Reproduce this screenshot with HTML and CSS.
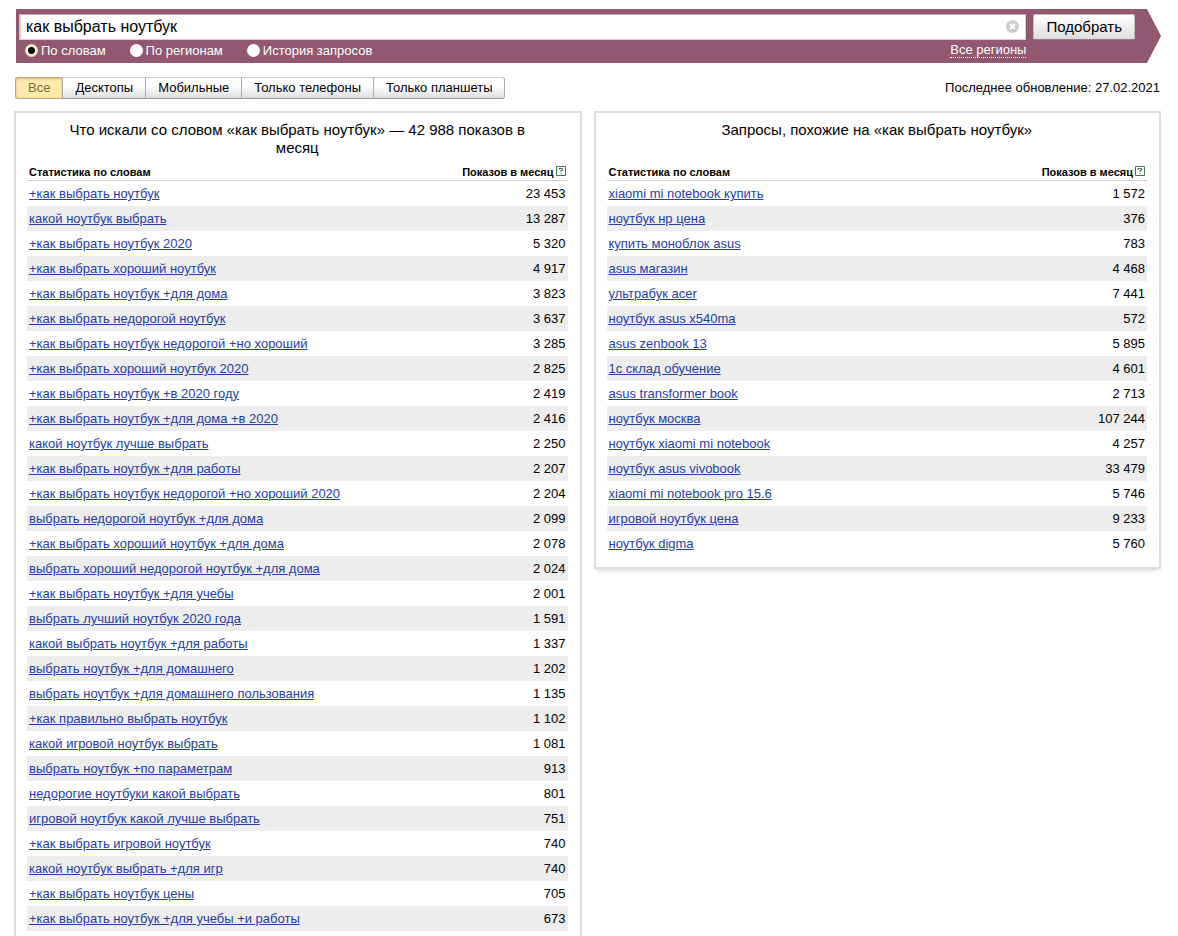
FILE: index.html
```
<!DOCTYPE html>
<html lang="ru">
<head>
    <meta charset="UTF-8">
    <meta name="viewport" content="width=device-width, initial-scale=1.0">
    <title>Подбор слов</title>
    <link rel="stylesheet" href="styles.css">
</head>
<body>
    <form class="search">
        <div class="search-main">
            <div class="search-field">
                <input type="text" class="search-input" value="как выбрать ноутбук" aria-label="Запрос">
                <button type="reset" class="search-clear" aria-label="Очистить">
                    <svg width="13" height="13" viewBox="0 0 13 13">
                        <circle cx="6.5" cy="6.5" r="6.5" fill="#ccc"/>
                        <path d="M4 4l5 5M9 4l-5 5" stroke="#fff" stroke-width="2"/>
                    </svg>
                </button>
            </div>
            <div class="search-options">
                <label class="option"><input type="radio" name="mode" checked>По словам</label>
                <label class="option"><input type="radio" name="mode">По регионам</label>
                <label class="option"><input type="radio" name="mode">История запросов</label>
                <a href="#" class="regions">Все регионы</a>
            </div>
        </div>
        <button type="submit" class="search-button">Подобрать</button>
    </form>

    <div class="toolbar">
        <div class="tabs">
            <button type="button" class="tab active">Все</button>
            <button type="button" class="tab">Десктопы</button>
            <button type="button" class="tab">Мобильные</button>
            <button type="button" class="tab">Только телефоны</button>
            <button type="button" class="tab">Только планшеты</button>
        </div>
        <div class="updated">Последнее обновление: 27.02.2021</div>
    </div>

    <div class="panels">
        <div class="panel">
            <h2>Что искали со словом «как выбрать ноутбук» — 42 988 показов в месяц</h2>
            <table>
                <thead>
                    <tr>
                        <th>Статистика по словам</th>
                        <th>Показов в месяц<a href="#" class="help" aria-label="Справка"><svg width="10" height="10" viewBox="0 0 10 10" fill="none" stroke="#3f7550"><path d="M.5 .5h9v9h-9z"/><path d="M3 4V2.500h3.500v2H5V6M4.500 7.500h1"/></svg></a></th>
                    </tr>
                </thead>
                <tbody>
                    <tr><td><a href="#">+как выбрать ноутбук</a></td><td>23 453</td></tr>
                    <tr><td><a href="#">какой ноутбук выбрать</a></td><td>13 287</td></tr>
                    <tr><td><a href="#">+как выбрать ноутбук 2020</a></td><td>5 320</td></tr>
                    <tr><td><a href="#">+как выбрать хороший ноутбук</a></td><td>4 917</td></tr>
                    <tr><td><a href="#">+как выбрать ноутбук +для дома</a></td><td>3 823</td></tr>
                    <tr><td><a href="#">+как выбрать недорогой ноутбук</a></td><td>3 637</td></tr>
                    <tr><td><a href="#">+как выбрать ноутбук недорогой +но хороший</a></td><td>3 285</td></tr>
                    <tr><td><a href="#">+как выбрать хороший ноутбук 2020</a></td><td>2 825</td></tr>
                    <tr><td><a href="#">+как выбрать ноутбук +в 2020 году</a></td><td>2 419</td></tr>
                    <tr><td><a href="#">+как выбрать ноутбук +для дома +в 2020</a></td><td>2 416</td></tr>
                    <tr><td><a href="#">какой ноутбук лучше выбрать</a></td><td>2 250</td></tr>
                    <tr><td><a href="#">+как выбрать ноутбук +для работы</a></td><td>2 207</td></tr>
                    <tr><td><a href="#">+как выбрать ноутбук недорогой +но хороший 2020</a></td><td>2 204</td></tr>
                    <tr><td><a href="#">выбрать недорогой ноутбук +для дома</a></td><td>2 099</td></tr>
                    <tr><td><a href="#">+как выбрать хороший ноутбук +для дома</a></td><td>2 078</td></tr>
                    <tr><td><a href="#">выбрать хороший недорогой ноутбук +для дома</a></td><td>2 024</td></tr>
                    <tr><td><a href="#">+как выбрать ноутбук +для учебы</a></td><td>2 001</td></tr>
                    <tr><td><a href="#">выбрать лучший ноутбук 2020 года</a></td><td>1 591</td></tr>
                    <tr><td><a href="#">какой выбрать ноутбук +для работы</a></td><td>1 337</td></tr>
                    <tr><td><a href="#">выбрать ноутбук +для домашнего</a></td><td>1 202</td></tr>
                    <tr><td><a href="#">выбрать ноутбук +для домашнего пользования</a></td><td>1 135</td></tr>
                    <tr><td><a href="#">+как правильно выбрать ноутбук</a></td><td>1 102</td></tr>
                    <tr><td><a href="#">какой игровой ноутбук выбрать</a></td><td>1 081</td></tr>
                    <tr><td><a href="#">выбрать ноутбук +по параметрам</a></td><td>913</td></tr>
                    <tr><td><a href="#">недорогие ноутбуки какой выбрать</a></td><td>801</td></tr>
                    <tr><td><a href="#">игровой ноутбук какой лучше выбрать</a></td><td>751</td></tr>
                    <tr><td><a href="#">+как выбрать игровой ноутбук</a></td><td>740</td></tr>
                    <tr><td><a href="#">какой ноутбук выбрать +для игр</a></td><td>740</td></tr>
                    <tr><td><a href="#">+как выбрать ноутбук цены</a></td><td>705</td></tr>
                    <tr><td><a href="#">+как выбрать ноутбук +для учебы +и работы</a></td><td>673</td></tr>
                </tbody>
            </table>
        </div>

        <div class="panel">
            <h2>Запросы, похожие на «как выбрать ноутбук»</h2>
            <table>
                <thead>
                    <tr>
                        <th>Статистика по словам</th>
                        <th>Показов в месяц<a href="#" class="help" aria-label="Справка"><svg width="10" height="10" viewBox="0 0 10 10" fill="none" stroke="#3f7550"><path d="M.5 .5h9v9h-9z"/><path d="M3 4V2.500h3.500v2H5V6M4.500 7.500h1"/></svg></a></th>
                    </tr>
                </thead>
                <tbody>
                    <tr><td><a href="#">xiaomi mi notebook купить</a></td><td>1 572</td></tr>
                    <tr><td><a href="#">ноутбук нр цена</a></td><td>376</td></tr>
                    <tr><td><a href="#">купить моноблок asus</a></td><td>783</td></tr>
                    <tr><td><a href="#">asus магазин</a></td><td>4 468</td></tr>
                    <tr><td><a href="#">ультрабук acer</a></td><td>7 441</td></tr>
                    <tr><td><a href="#">ноутбук asus x540ma</a></td><td>572</td></tr>
                    <tr><td><a href="#">asus zenbook 13</a></td><td>5 895</td></tr>
                    <tr><td><a href="#">1с склад обучение</a></td><td>4 601</td></tr>
                    <tr><td><a href="#">asus transformer book</a></td><td>2 713</td></tr>
                    <tr><td><a href="#">ноутбук москва</a></td><td>107 244</td></tr>
                    <tr><td><a href="#">ноутбук xiaomi mi notebook</a></td><td>4 257</td></tr>
                    <tr><td><a href="#">ноутбук asus vivobook</a></td><td>33 479</td></tr>
                    <tr><td><a href="#">xiaomi mi notebook pro 15.6</a></td><td>5 746</td></tr>
                    <tr><td><a href="#">игровой ноутбук цена</a></td><td>9 233</td></tr>
                    <tr><td><a href="#">ноутбук digma</a></td><td>5 760</td></tr>
                </tbody>
            </table>
        </div>
    </div>
</body>
</html>
```
FILE: styles.css
```
* {
    box-sizing: border-box;
}
body {
    margin: 0;
    padding: 9px 17px 0 14px;
    font-family: Arial, "Liberation Sans", sans-serif;
    font-size: 13px;
    color: #000;
    background-color: #fff;
}
input, button {
    font-family: inherit;
    margin: 0;
}

/* search bar with the arrow on the right */
.search {
    display: flex;
    align-items: flex-start;
    gap: 7px;
    height: 54px;
    margin-left: 2px;
    padding: 5px 26px 0 3px;
    background-color: #91586f;
    clip-path: polygon(0 0, calc(100% - 14px) 0, 100% 50%, calc(100% - 14px) 100%, 0 100%);
}
.search-main {
    flex: 1;
}
.search-field {
    position: relative;
}
.search-input {
    display: block;
    width: 100%;
    height: 26px;
    padding: 0 30px 0 5px;
    border: 1px solid #d8ccd2;
    border-left-width: 2px;
    border-top-color: #b9a9b0;
    font-size: 16px;
    color: #000;
    background-color: #fff;
    outline: none;
}
.search-clear {
    position: absolute;
    top: 6px;
    right: 7px;
    padding: 0;
    border: none;
    background: none;
    cursor: pointer;
}
.search-clear svg {
    display: block;
}
.search-options {
    display: flex;
    align-items: center;
    gap: 24px;
    height: 21px;
    padding-left: 6px;
    color: #fff;
}
.option {
    display: flex;
    align-items: center;
    gap: 3px;
}
.option input {
    appearance: none;
    width: 13px;
    height: 13px;
    border-radius: 50%;
    background-color: #fff;
}
.option input:checked {
    background: radial-gradient(circle, #000 0 3px, #fff6dc 4px, #f3dfb0 6px);
}
.regions {
    margin-left: auto;
    color: #fff;
    line-height: 14px;
    text-decoration: none;
    border-bottom: 1px dotted #fff;
}
.search-button {
    height: 26px;
    padding: 0 12px;
    border: 1px solid #bbb;
    border-bottom-color: #888;
    border-radius: 2px;
    font-size: 15px;
    line-height: 22px;
    color: #000;
    background: linear-gradient(#fff, #dedede);
    cursor: pointer;
}

.toolbar {
    display: flex;
    justify-content: space-between;
    align-items: flex-start;
    margin: 14px 1px 12px;
}
.updated {
    line-height: 21px;
}
.tabs {
    display: flex;
}
.tab {
    height: 22px;
    padding: 0 12px;
    border: 1px solid #ccc;
    border-left-color: #aaa;
    border-bottom-color: #999;
    border-right: none;
    font-size: 13px;
    line-height: 18px;
    color: #000;
    background: linear-gradient(#fff 40%, #dedede);
    cursor: pointer;
}
.tab:last-child {
    border-right: 1px solid #aaa;
    border-radius: 0 3px 3px 0;
}
.tab.active {
    border-color: #b9a878;
    border-radius: 3px 0 0 3px;
    line-height: 20px;
    color: #7b6d3d;
    background: #ffebac;
    box-shadow: inset 0 1px 3px #d6bd75;
}

.panels {
    display: grid;
    grid-template-columns: 1fr 1fr;
    align-items: start;
    gap: 12px;
}
.panel {
    padding: 8px 12px 11px 11px;
    border: 2px solid #ddd;
    box-shadow: 0 4px 5px -3px #ccc;
}
.panel h2 {
    min-height: 36px;
    margin: 0;
    padding: 0 30px;
    font-size: 15px;
    font-weight: normal;
    line-height: 18px;
    text-align: center;
}
table {
    width: 100%;
    border-collapse: separate;
    border-spacing: 0;
}
th {
    height: 24px;
    padding: 0 2px 1px;
    border-bottom: 1px solid #ccc;
    font-size: 11px;
    line-height: 13px;
    text-align: left;
    vertical-align: bottom;
}
td {
    height: 25px;
    padding: 0 2px;
}
th:last-child, td:last-child {
    text-align: right;
    white-space: nowrap;
}
tbody tr:nth-child(even) {
    background-color: #ededed;
}
td a {
    color: #2440a8;
}
.help {
    margin-left: 2px;
}
```
